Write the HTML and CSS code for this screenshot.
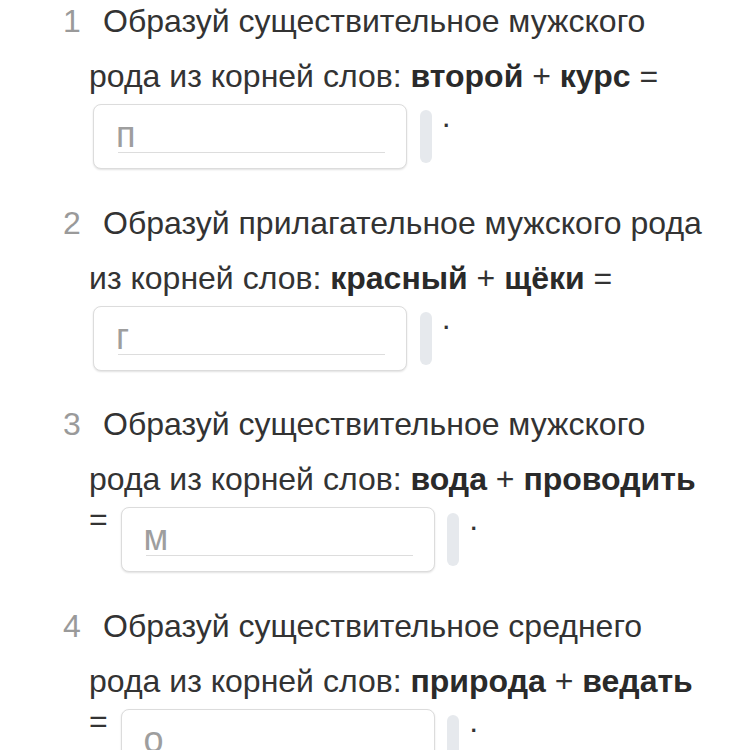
FILE: index.html
```html
<!DOCTYPE html>
<html lang="ru">
<head>
<meta charset="utf-8">
<title>Задания</title>
<link rel="stylesheet" href="styles.css">
</head>
<body>
<ol class="tasks">
  <li class="task"><span class="txt"><span class="num">1</span>Образуй существительное мужского рода из корней слов: <b>второй</b> + <b>курс</b></span> = <span class="field"><span class="line">п</span></span> <span class="pill"></span> .</li>
  <li class="task"><span class="txt"><span class="num">2</span>Образуй прилагательное мужского рода из корней слов: <b>красный</b> + <b>щёки</b></span> = <span class="field"><span class="line">г</span></span> <span class="pill"></span> .</li>
  <li class="task"><span class="txt"><span class="num">3</span>Образуй существительное мужского рода из корней слов: <b>вода</b> + <b>проводить</b></span> = <span class="field"><span class="line">м</span></span> <span class="pill"></span> .</li>
  <li class="task"><span class="txt"><span class="num">4</span>Образуй существительное среднего рода из корней слов: <b>природа</b> + <b>ведать</b></span> = <span class="field"><span class="line">о</span></span> <span class="pill"></span> .</li>
</ol>
</body>
</html>
```
FILE: styles.css
```css
html, body {
  margin: 0;
  padding: 0;
  background: #ffffff;
}

body {
  font-family: "Liberation Sans", Arial, sans-serif;
  color: #333333;
}

.tasks {
  list-style: none;
  margin: -6px 0 0;
  padding: 0;
}

.task {
  width: 621px;
  margin: 0 0 26.5px;
  padding-left: 89px;
  font-size: 32px;
  line-height: 25px;
  text-indent: -26px;
}

.txt {
  line-height: 55px;
}

.num {
  display: inline-block;
  width: 40px;
  text-indent: 0;
  color: #9a9a9a;
}

.task b {
  font-weight: bold;
  color: #2a2a2a;
}

.field {
  display: inline-block;
  vertical-align: top;
  box-sizing: border-box;
  width: 314px;
  height: 65px;
  margin: 0 4px;
  padding: 0 21px 0 24px;
  border: 1px solid #dcdcdc;
  border-radius: 8px;
  box-shadow: 0 1px 2px rgba(0, 0, 0, 0.12);
  text-indent: 0;
  background: #ffffff;
}

.line {
  display: block;
  padding-top: 13px;
  font-size: 36px;
  line-height: 34px;
  text-indent: -2px;
  border-bottom: 1px solid #dddddd;
  color: #9e9e9e;
}

.pill {
  display: inline-block;
  vertical-align: top;
  width: 12px;
  height: 53px;
  margin: 6px 1px 0 0;
  border-radius: 6px;
  background: #e6e9ed;
}
```
